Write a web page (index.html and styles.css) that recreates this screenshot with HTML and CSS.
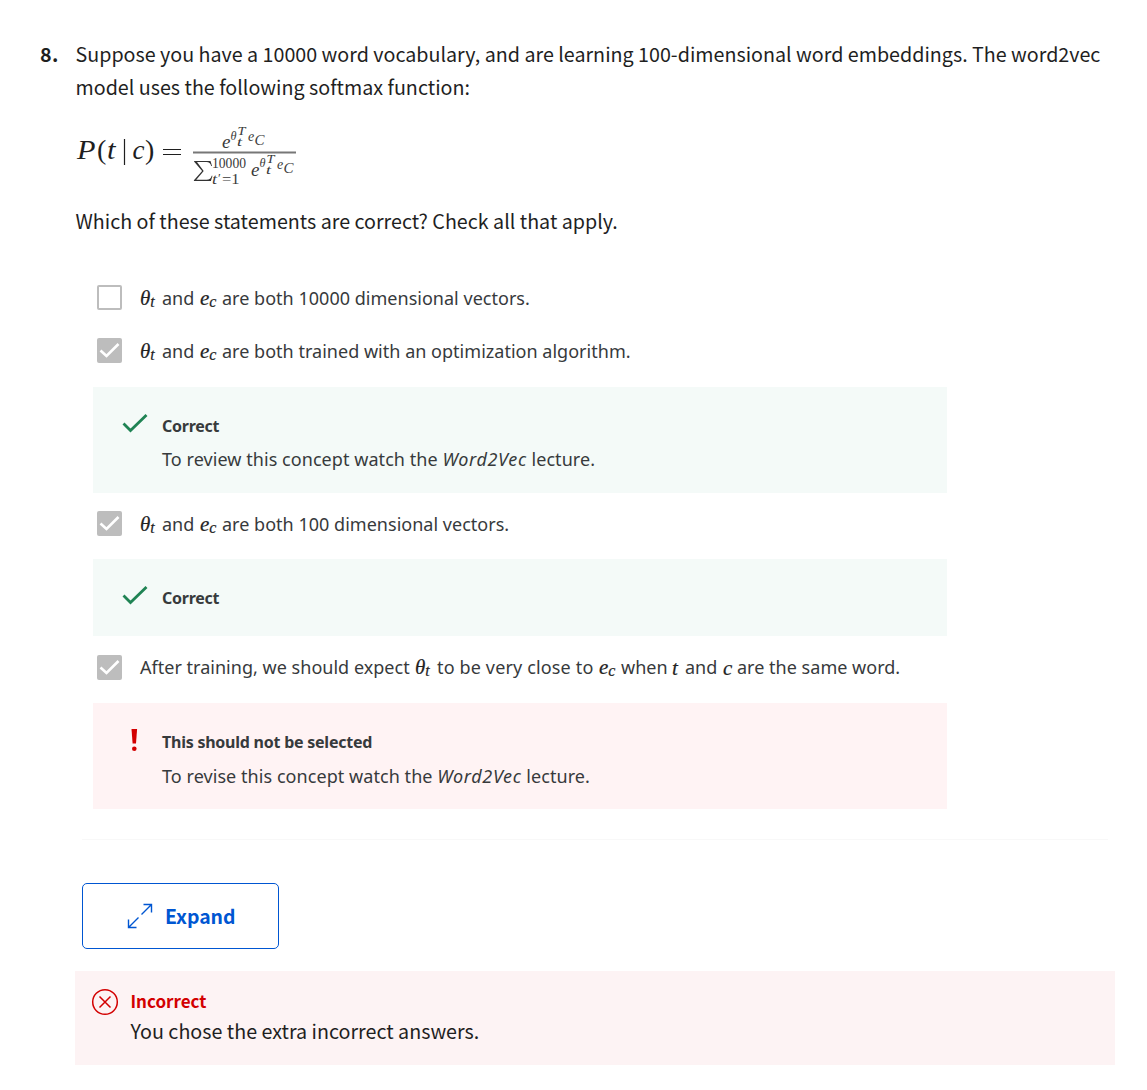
FILE: index.html
```
<!DOCTYPE html>
<html lang="en">
<head>
<meta charset="utf-8">
<title>Quiz question 8</title>
<link rel="stylesheet" href="styles.css">
</head>
<body>
<main class="question">
  <div class="prompt">
    <div class="number">8.</div>
    <div class="prompt-body">
      <p>Suppose you have a 10000 word vocabulary, and are learning 100-dimensional word embeddings. The word2vec<br>model uses the following softmax function:</p>
      <svg class="formula" width="224" height="70" viewBox="0 0 224 70" role="img" aria-label="Softmax probability of t given c">
        <g class="var">
          <text x="1" y="36" font-size="28" textLength="18.500" lengthAdjust="spacingAndGlyphs">P</text>
          <text x="31" y="36" font-size="28" textLength="8.500" lengthAdjust="spacingAndGlyphs">t</text>
          <text x="56.500" y="36" font-size="27" textLength="12" lengthAdjust="spacingAndGlyphs">c</text>
        </g>
        <g class="var small">
          <text x="146" y="24.500" font-size="19">e</text>
          <text x="154.500" y="17" font-size="13" textLength="6" lengthAdjust="spacingAndGlyphs">θ</text>
          <text x="161.500" y="11.500" font-size="12" textLength="8" lengthAdjust="spacingAndGlyphs">T</text>
          <text x="161" y="23" font-size="13" textLength="5" lengthAdjust="spacingAndGlyphs">t</text>
          <text x="172" y="18" font-size="14">e</text>
          <text x="178.500" y="22" font-size="14" textLength="10" lengthAdjust="spacingAndGlyphs">C</text>
          <text x="136" y="60.500" font-size="14" textLength="5" lengthAdjust="spacingAndGlyphs">t</text>
          <text x="175" y="53" font-size="19">e</text>
          <text x="183.500" y="44" font-size="13" textLength="6" lengthAdjust="spacingAndGlyphs">θ</text>
          <text x="190.500" y="39.500" font-size="12" textLength="8" lengthAdjust="spacingAndGlyphs">T</text>
          <text x="190" y="50.500" font-size="13" textLength="5" lengthAdjust="spacingAndGlyphs">t</text>
          <text x="201" y="45.500" font-size="14">e</text>
          <text x="207.500" y="49.500" font-size="14" textLength="10" lengthAdjust="spacingAndGlyphs">C</text>
        </g>
        <text x="21" y="36" font-size="28">(</text>
        <text x="69" y="36" font-size="28">)</text>
        <g class="small">
          <text x="136" y="45" font-size="14" textLength="34" lengthAdjust="spacingAndGlyphs">10000</text>
          <text x="142" y="59" font-size="13">′</text>
          <text x="146" y="61" font-size="14" textLength="17.500" lengthAdjust="spacingAndGlyphs">=1</text>
        </g>
        <path class="stroke" d="M48.500 16v26M87 26.500h18M87 31.500h18"/>
        <path class="bar" d="M117 29.500h103"/>
        <path class="sigma" d="M118 38h16.500l1.500 5h-.8q-.9-4-4.700-4h-9.500l6.700 8.900-7.400 8.900h10.300q4.200 0 5.100-4h.8l-1.600 5.200h-17v-.7l8.200-9.300-7.900-9.300z"/>
      </svg>
      <p class="ask">Which of these statements are correct? Check all that apply.</p>
    </div>
  </div>

  <div class="options">
    <label class="option"><span class="box"></span><span class="label"><i class="m theta">θ<sub>t</sub></i><span class="and">and</span><i class="m ec">e<sub>c</sub></i><span>are both 10000 dimensional vectors.</span></span></label>
    <label class="option"><span class="box on"><svg viewBox="0 0 25 25"><path d="M3.500 12.500l6 5.500L21.500 6"/></svg></span><span class="label"><i class="m theta">θ<sub>t</sub></i><span class="and">and</span><i class="m ec">e<sub>c</sub></i><span>are both trained with an optimization algorithm.</span></span></label>
    <section class="feedback good">
      <svg class="mark" viewBox="0 0 26 20"><path d="M1.500 10.500l7 7L24.500 2"/></svg>
      <div><h3>Correct</h3><p class="review">To review this concept watch the <em>Word2Vec</em> lecture.</p></div>
    </section>
    <label class="option third"><span class="box on"><svg viewBox="0 0 25 25"><path d="M3.500 12.500l6 5.500L21.500 6"/></svg></span><span class="label"><i class="m theta">θ<sub>t</sub></i><span class="and">and</span><i class="m ec">e<sub>c</sub></i><span>are both 100 dimensional vectors.</span></span></label>
    <section class="feedback good short">
      <svg class="mark" viewBox="0 0 26 20"><path d="M1.500 10.500l7 7L24.500 2"/></svg>
      <div><h3>Correct</h3></div>
    </section>
    <label class="option fourth"><span class="box on"><svg viewBox="0 0 25 25"><path d="M3.500 12.500l6 5.500L21.500 6"/></svg></span><span class="label"><span class="expect">After training, we should expect</span><i class="m theta">θ<sub>t</sub></i><span class="close">to be very close to</span><i class="m ec">e<sub>c</sub></i><span class="when">when</span><i class="m one">t</i><span class="and-c">and</span><i class="m one last">c</i><span>are the same word.</span></span></label>
    <section class="feedback bad">
      <svg class="mark bang" viewBox="0 0 26 24"><path d="M9.500 0h5.600l-1.100 14.500h-3.400z"/><circle cx="12.300" cy="19.800" r="2.300"/></svg>
      <div><h3>This should not be selected</h3><p>To revise this concept watch the <em>Word2Vec</em> lecture.</p></div>
    </section>
  </div>

  <hr class="rule">
  <button class="expand" type="button"><svg width="26" height="26" viewBox="0 0 26 26"><path d="M14.500 11.500L24 2M16.500 1.500h8v8M11.500 14.500L2 24M1.500 16.500v8h8"/></svg><span>Expand</span></button>
  <section class="result">
    <svg width="28" height="28" viewBox="0 0 28 28"><circle cx="14" cy="14" r="12.300"/><path d="M8.500 8.500l11 11M19.500 8.500l-11 11"/></svg>
    <div><h2>Incorrect</h2><p>You chose the extra incorrect answers.</p></div>
  </section>
</main>
</body>
</html>
```
FILE: styles.css
```
* { box-sizing: border-box; }
body { margin: 0; background: #fff; color: #1f1f1f; font-family: "Noto Sans CJK SC", sans-serif; }
p, h2, h3 { margin: 0; }
.question { width: 1147px; height: 1090px; padding-top: 37px; overflow: hidden; }
.prompt { display: flex; padding-left: 40px; font-size: 19.7px; line-height: 33px; white-space: nowrap; }
.prompt p { margin-left: -.5px; }
.number { width: 36px; font-weight: 700; letter-spacing: .3px; }
.formula { display: block; margin-top: 20px; font-family: "Liberation Serif", serif; fill: #1f1f1f; }
.formula .var { font-style: italic; }
.formula .small { fill: #3a3a3a; }
.stroke { stroke: #1f1f1f; stroke-width: 1.2; fill: none; }
.bar { stroke: #777; stroke-width: 2; }
.sigma { fill: #333; }
.prompt .ask { margin-top: 11px; }
.options { padding: 48px 0 0 93px; width: 947px; font-family: "Noto Sans", sans-serif; font-size: 18px; color: #373a3c; }
.option { display: flex; align-items: center; height: 25px; margin: 0 0 28px 4px; }
.box { width: 25px; height: 25px; border: 2px solid #bdbdbd; border-radius: 2px; margin-right: 18px; flex: none; }
.box.on { background: #bdbdbd; border: 0; }
.box svg { display: block; fill: none; stroke: #fff; stroke-width: 2.6; }
.label { display: flex; align-items: baseline; margin-top: 2px; white-space: nowrap; line-height: 25px; letter-spacing: .02px; }
.m { font-family: "Liberation Serif", serif; font-size: 21px; line-height: 20px; color: #222; -webkit-text-stroke: .2px #222; }
.m sub { font-size: 16px; line-height: 0; vertical-align: -2px; }
.theta, .ec { width: 22px; flex: none; }
.and { width: 38px; }
.feedback { display: flex; height: 106px; margin-top: -4px; padding: 22px 0 0 28px; background: #f4faf8; line-height: 34px; white-space: nowrap; }
.feedback h3 { font-size: 16px; line-height: 34px; letter-spacing: -.24px; }
.feedback p { letter-spacing: .06px; }
.feedback em { letter-spacing: .65px; }
.feedback .review { margin-top: -1px; }
.mark { width: 26px; height: 20px; margin: 4px 14.5px 0 .5px; fill: none; stroke: #1f8354; stroke-width: 2.8; }
.feedback.short { height: 77px; margin-top: -5px; }
.feedback.bad { margin-top: -5px; background: #fff3f4; }
.mark.bang { height: 24px; fill: #d30001; stroke: none; }
.third { margin-top: 18px; }
.fourth { margin-top: 19px; }
.fourth .label { margin-top: 0; }
.expect { width: 275px; }
.close { width: 162px; letter-spacing: .15px; }
.when { width: 51px; }
.one { width: 13px; position: relative; top: 1px; }
.and-c { width: 38px; }
.last { width: 14px; }
.rule { height: 1px; border: 0; background: #f8f8f8; margin: 30px 39px 0 82px; }
.expand { display: flex; align-items: center; width: 197px; height: 66px; margin: 43px 0 22px 82px; padding: 0 0 0 44px; background: #fff; border: 1.5px solid #0056d2; border-radius: 5px; color: #0056d2; font: 700 19.4px "Noto Sans CJK SC", sans-serif; }
.expand svg { fill: none; stroke: #0056d2; stroke-width: 1.4; margin-right: 12px; }
.expand span { margin-top: -2px; }
.result { display: flex; width: 1040px; height: 94px; margin-left: 75px; padding: 15px 0 0 16.5px; background: #fdf3f4; white-space: nowrap; font-size: 19.7px; line-height: 30px; }
.result svg { fill: none; stroke: #d30001; stroke-width: 1.5; margin: 2px 11.5px 0 -.5px; }
.result h2 { font-size: 17px; line-height: 30px; color: #d30001; }
```
